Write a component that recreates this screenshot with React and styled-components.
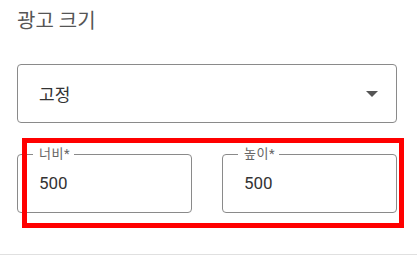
import styled, { createGlobalStyle } from "styled-components";

const GlobalStyle = createGlobalStyle`
  html, body {
    margin: 0;
    padding: 0;
    background: #fff;
  }
  body {
    font-family: Roboto, "Noto Sans CJK KR", "Noto Sans", sans-serif;
  }
`;

const Panel = styled.div`
  position: relative;
  width: 417px;
  height: 255px;
  box-sizing: border-box;
  padding: 7px 20px 0 17px;
  border-bottom: 1px solid #e0e0e0;
`;

const Title = styled.h3`
  margin: 0;
  font-size: 20px;
  font-weight: 400;
  line-height: 28px;
  color: #555;
`;

const SelectBox = styled.div`
  margin-top: 29px;
  height: 59px;
  box-sizing: border-box;
  border: 1px solid #8a8a8a;
  border-radius: 4px;
  display: flex;
  align-items: center;
  justify-content: space-between;
  padding: 0 18px 0 21px;
  font-size: 17px;
  color: #333;
`;

const Arrow = styled.span`
  width: 0;
  height: 0;
  border-left: 6.5px solid transparent;
  border-right: 6.5px solid transparent;
  border-top: 6px solid #555;
`;

const Row = styled.div`
  margin-top: 23px;
  display: grid;
  grid-template-columns: 175px 175px;
  justify-content: space-between;
`;

const Field = styled.fieldset`
  margin: 0;
  height: 67px;
  box-sizing: border-box;
  border: 1px solid #8a8a8a;
  border-radius: 4px;
  padding: 0 21px;
  display: flex;
  align-items: center;
  font-size: 17px;
  color: #333;
`;

const Legend = styled.legend`
  margin-left: -6px;
  padding: 0 4px 0 6px;
  font-size: 13px;
  line-height: 16px;
  letter-spacing: 0.5px;
  color: #666;
`;

const Value = styled.span`
  margin-top: -8px;
`;

const Highlight = styled.div`
  position: absolute;
  left: 22px;
  top: 138px;
  width: 382px;
  height: 90px;
  box-sizing: border-box;
  border: 5px solid #f00;
  pointer-events: none;
`;

export default function App() {
  return (
    <>
      <GlobalStyle />
      <Panel>
        <Title>광고 크기</Title>
        <SelectBox>
          <span>고정</span>
          <Arrow />
        </SelectBox>
        <Row>
          <Field>
            <Legend>너비*</Legend>
            <Value>500</Value>
          </Field>
          <Field>
            <Legend>높이*</Legend>
            <Value>500</Value>
          </Field>
        </Row>
        <Highlight />
      </Panel>
    </>
  );
}
